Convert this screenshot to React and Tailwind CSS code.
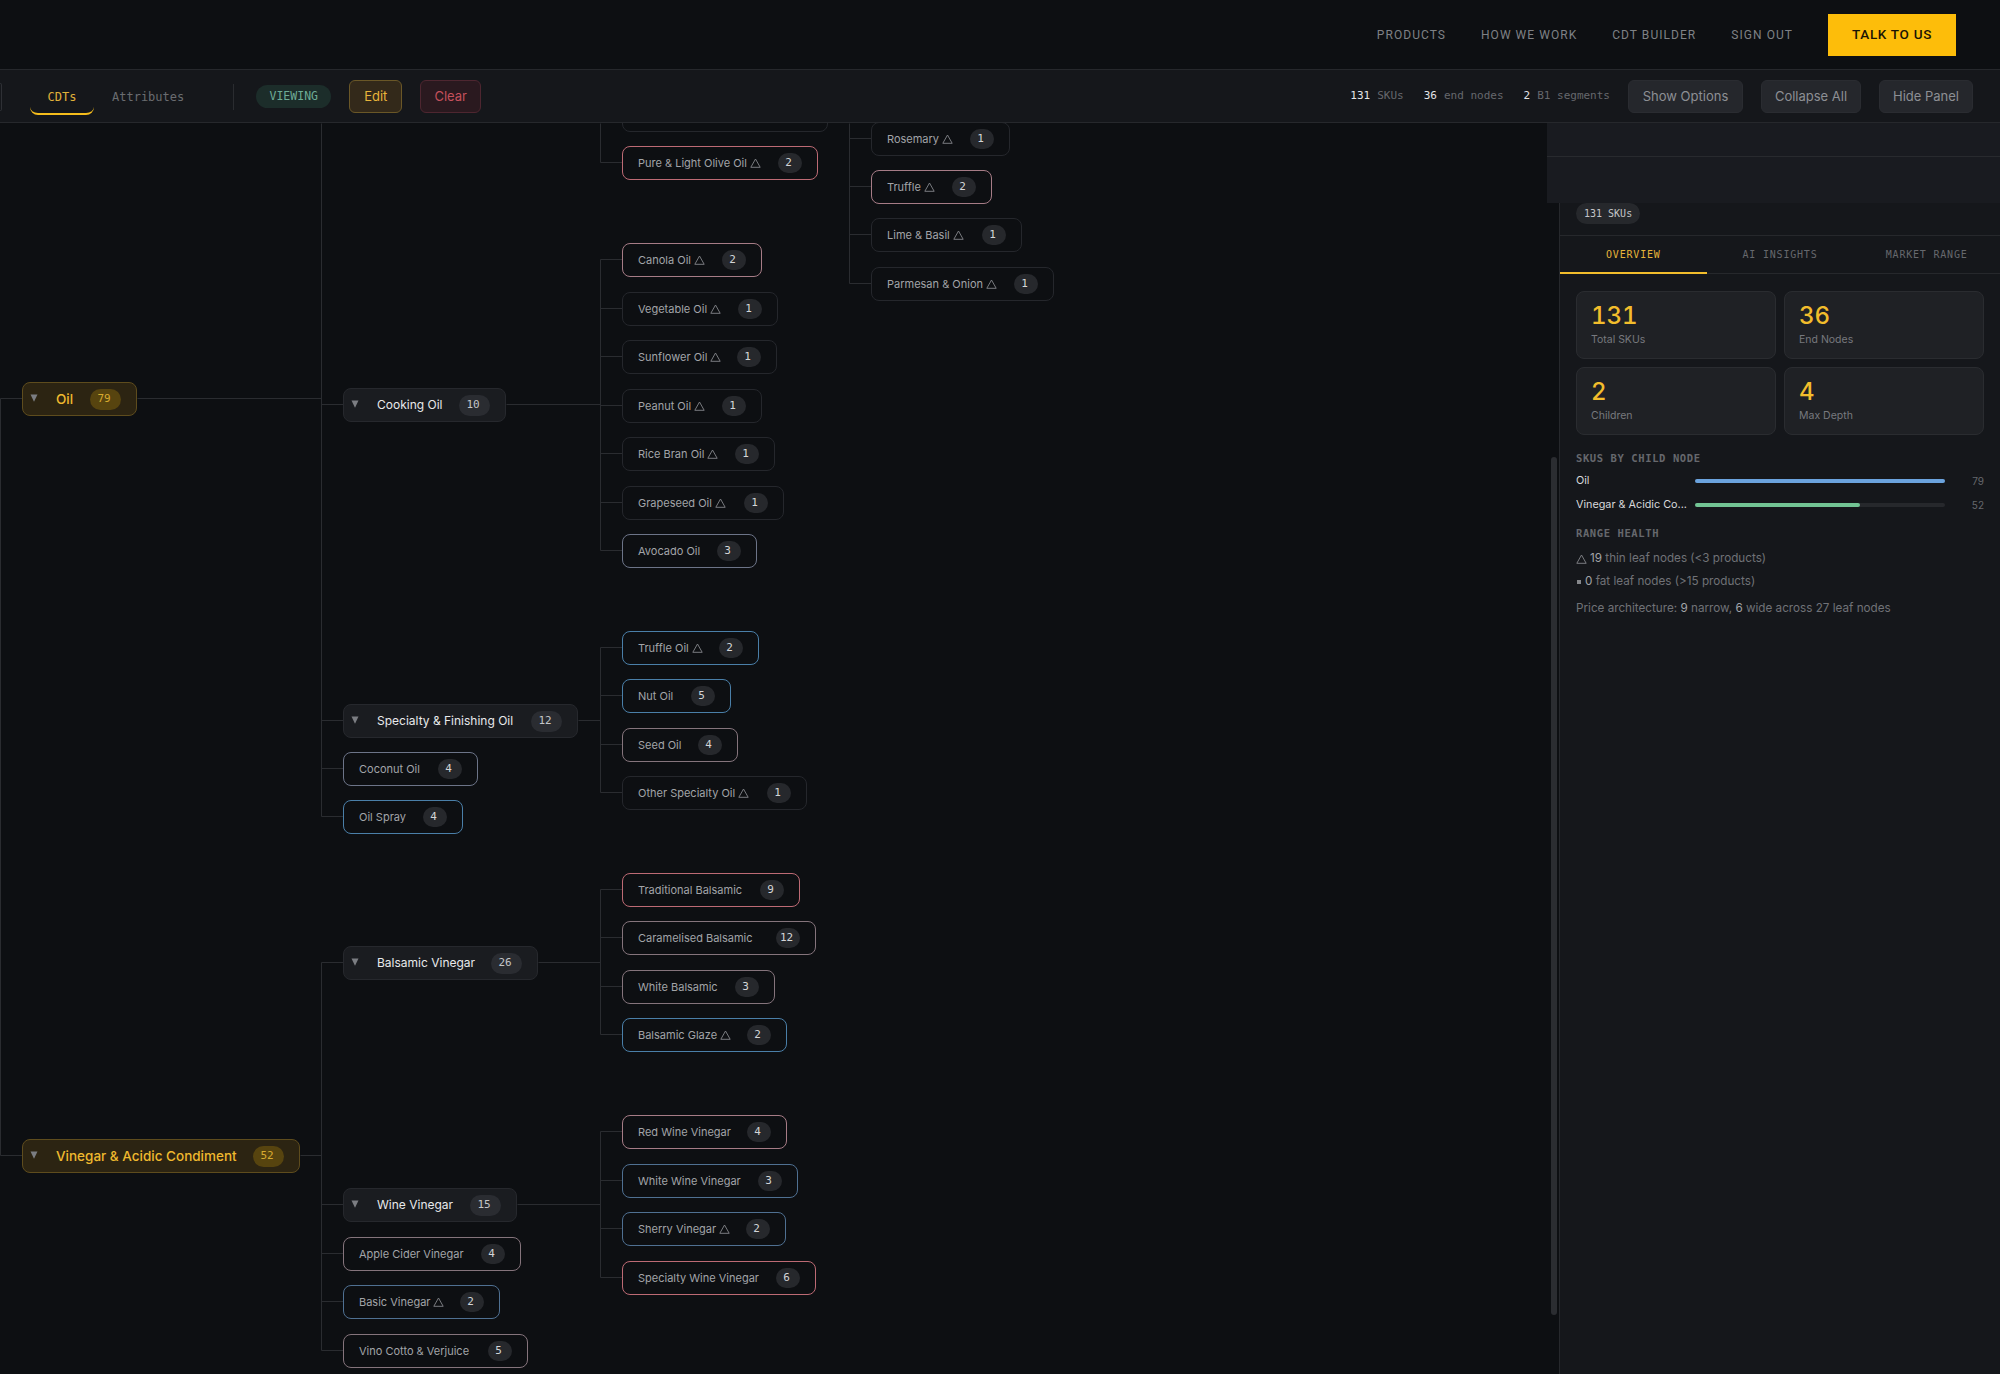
const RED = 'border-[#bd6a74]';
const PINK = 'border-[#a67c86]';
const MAUVE = 'border-[#85747c]';
const SLATE = 'border-[#6c7488]';
const BLUE = 'border-[#4a7fa8]';
const STEEL = 'border-[#4f7092]';
const PLAIN = 'border-[#25272c]';

const TOP_OFFSET = 123;
const MONO = "font-['DejaVu_Sans_Mono',monospace]";

const parents = [
  { label: 'Oil', count: 79, x: 22, x2: 137, y: 398, top: true },
  { label: 'Vinegar & Acidic Condiment', count: 52, x: 22, x2: 300, y: 1155, top: true },
  { label: 'Cooking Oil', count: 10, x: 343, x2: 506, y: 404 },
  { label: 'Specialty & Finishing Oil', count: 12, x: 343, x2: 578, y: 720 },
  { label: 'Balsamic Vinegar', count: 26, x: 343, x2: 538, y: 962 },
  { label: 'Wine Vinegar', count: 15, x: 343, x2: 517, y: 1204 },
];

const leaves = [
  { label: '', count: '', x: 622, x2: 828, y: 114, color: PLAIN },
  { label: 'Pure & Light Olive Oil', thin: true, count: 2, x: 622, x2: 818, y: 162, color: RED },
  { label: 'Canola Oil', thin: true, count: 2, x: 622, x2: 762, y: 259, color: PINK },
  { label: 'Vegetable Oil', thin: true, count: 1, x: 622, x2: 778, y: 308, color: PLAIN },
  { label: 'Sunflower Oil', thin: true, count: 1, x: 622, x2: 777, y: 356, color: PLAIN },
  { label: 'Peanut Oil', thin: true, count: 1, x: 622, x2: 762, y: 405, color: PLAIN },
  { label: 'Rice Bran Oil', thin: true, count: 1, x: 622, x2: 775, y: 453, color: PLAIN },
  { label: 'Grapeseed Oil', thin: true, count: 1, x: 622, x2: 784, y: 502, color: PLAIN },
  { label: 'Avocado Oil', count: 3, x: 622, x2: 757, y: 550, color: SLATE },
  { label: 'Truffle Oil', thin: true, count: 2, x: 622, x2: 759, y: 647, color: BLUE },
  { label: 'Nut Oil', count: 5, x: 622, x2: 731, y: 695, color: BLUE },
  { label: 'Seed Oil', count: 4, x: 622, x2: 738, y: 744, color: MAUVE },
  { label: 'Other Specialty Oil', thin: true, count: 1, x: 622, x2: 807, y: 792, color: PLAIN },
  { label: 'Traditional Balsamic', count: 9, x: 622, x2: 800, y: 889, color: RED },
  { label: 'Caramelised Balsamic', count: 12, x: 622, x2: 816, y: 937, color: MAUVE },
  { label: 'White Balsamic', count: 3, x: 622, x2: 775, y: 986, color: MAUVE },
  { label: 'Balsamic Glaze', thin: true, count: 2, x: 622, x2: 787, y: 1034, color: BLUE },
  { label: 'Red Wine Vinegar', count: 4, x: 622, x2: 787, y: 1131, color: PINK },
  { label: 'White Wine Vinegar', count: 3, x: 622, x2: 798, y: 1180, color: STEEL },
  { label: 'Sherry Vinegar', thin: true, count: 2, x: 622, x2: 786, y: 1228, color: STEEL },
  { label: 'Specialty Wine Vinegar', count: 6, x: 622, x2: 816, y: 1277, color: RED },
  { label: 'Coconut Oil', count: 4, x: 343, x2: 478, y: 768, color: SLATE },
  { label: 'Oil Spray', count: 4, x: 343, x2: 463, y: 816, color: BLUE },
  { label: 'Apple Cider Vinegar', count: 4, x: 343, x2: 521, y: 1253, color: MAUVE },
  { label: 'Basic Vinegar', thin: true, count: 2, x: 343, x2: 500, y: 1301, color: STEEL },
  { label: 'Vino Cotto & Verjuice', count: 5, x: 343, x2: 528, y: 1350, color: MAUVE },
  { label: 'Rosemary', thin: true, count: 1, x: 871, x2: 1010, y: 138, color: PLAIN },
  { label: 'Truffle', thin: true, count: 2, x: 871, x2: 992, y: 186, color: PINK },
  { label: 'Lime & Basil', thin: true, count: 1, x: 871, x2: 1022, y: 234, color: PLAIN },
  { label: 'Parmesan & Onion', thin: true, count: 1, x: 871, x2: 1054, y: 283, color: PLAIN },
];

// connector segments in page coordinates: [x1, y1, x2, y2]
const links = [
  [0, 398, 0, 1155], [0, 398, 22, 398], [0, 1155, 22, 1155],
  [137, 398, 321, 398], [300, 1155, 321, 1155],
  [321, 123, 321, 816], [321, 962, 321, 1350],
  [321, 404, 343, 404], [321, 720, 343, 720], [321, 768, 343, 768], [321, 816, 343, 816],
  [321, 962, 343, 962], [321, 1204, 343, 1204], [321, 1253, 343, 1253], [321, 1301, 343, 1301], [321, 1350, 343, 1350],
  [600, 123, 600, 162], [600, 162, 622, 162],
  [506, 404, 600, 404], [600, 259, 600, 550],
  [600, 259, 622, 259], [600, 308, 622, 308], [600, 356, 622, 356], [600, 405, 622, 405], [600, 453, 622, 453], [600, 502, 622, 502], [600, 550, 622, 550],
  [578, 720, 600, 720], [600, 647, 600, 792],
  [600, 647, 622, 647], [600, 695, 622, 695], [600, 744, 622, 744], [600, 792, 622, 792],
  [538, 962, 600, 962], [600, 889, 600, 1034],
  [600, 889, 622, 889], [600, 937, 622, 937], [600, 986, 622, 986], [600, 1034, 622, 1034],
  [517, 1204, 600, 1204], [600, 1131, 600, 1277],
  [600, 1131, 622, 1131], [600, 1180, 622, 1180], [600, 1228, 622, 1228], [600, 1277, 622, 1277],
  [849, 123, 849, 283], [849, 138, 871, 138], [849, 186, 871, 186], [849, 234, 871, 234], [849, 283, 871, 283],
];

const nodePos = (n) => ({ left: n.x, width: n.x2 - n.x, top: n.y - 16 - TOP_OFFSET });

const ThinMark = ({ className }) => (
  <svg width="11" height="10" viewBox="0 0 11 10" fill="none" className={className}>
    <path d="M5.5 1 L10.2 9.3 H0.8 Z" stroke="#85878b" strokeWidth="0.9" strokeLinejoin="round" />
  </svg>
);

const Caret = () => (
  <svg width="8" height="8" viewBox="0 0 8 8" className="shrink-0 mr-[18px] -mt-[2px]">
    <path d="M0.5 0.5 H7.5 L4 7.8 Z" fill="#7b7d82" />
  </svg>
);

const ParentNode = ({ node }) => (
  <div
    style={nodePos(node)}
    className={`absolute h-[34px] rounded-lg border flex items-center justify-between pl-[7px] pr-[15px] ${
      node.top ? 'bg-[#2c2412] border-[#5e4c1d]' : 'bg-[#1a1c20] border-[#26282d]'
    }`}
  >
    <div className="flex items-center min-w-0">
      <Caret />
      <span
        className={`whitespace-nowrap ${
          node.top ? 'text-[13.5px] font-medium text-[#efb92e]' : 'text-[12px] font-normal text-[#e8e9eb]'
        }`}
      >
        {node.label}
      </span>
    </div>
    <span
      className={`h-[21px] w-[31px] shrink-0 rounded-full flex items-center justify-center pr-[3px] text-[11px] ${MONO} ${
        node.top ? 'bg-[#57440f] text-[#d7ab2f]' : 'bg-[#2a2c31] text-[#c4c5c8]'
      }`}
    >
      {node.count}
    </span>
  </div>
);

const LeafNode = ({ node }) => (
  <div
    style={nodePos(node)}
    className={`absolute h-[34px] rounded-lg border bg-[#0d0f12] flex items-center justify-between pl-[15px] pr-[15px] ${node.color}`}
  >
    <span className="flex items-center gap-[3px] whitespace-nowrap text-[11px] text-[#a2a4a8]">
      {node.label}
      {node.thin && <ThinMark />}
    </span>
    {node.count !== '' && (
      <span className={`h-[20px] w-[24px] shrink-0 rounded-full bg-[#26282c] flex items-center justify-center pr-[3px] text-[11px] text-[#d4d5d7] ${MONO}`}>
        {node.count}
      </span>
    )}
  </div>
);

const TreeCanvas = () => (
  <div className="relative flex-1 overflow-hidden">
    <svg className="absolute inset-0 w-full h-full" fill="none">
      {links.map(([x1, y1, x2, y2]) => (
        <line
          key={`${x1}-${y1}-${x2}-${y2}`}
          x1={x1 + 0.5}
          y1={y1 - TOP_OFFSET + 0.5}
          x2={x2 + 0.5}
          y2={y2 - TOP_OFFSET + 0.5}
          stroke="#2a2c30"
        />
      ))}
    </svg>
    {parents.map((n) => <ParentNode key={n.label} node={n} />)}
    {leaves.map((n) => <LeafNode key={n.label || 'clipped'} node={n} />)}
  </div>
);

const Header = () => (
  <header className="h-[69px] flex items-center justify-end pr-[44px] bg-[#0d0f12]">
    <nav className="flex items-center gap-[35px] text-[12px] tracking-[1.05px] text-[#7f8185] font-['Roboto',sans-serif]">
      <span>PRODUCTS</span>
      <span>HOW WE WORK</span>
      <span>CDT BUILDER</span>
      <span>SIGN OUT</span>
    </nav>
    <button className="ml-[35px] w-[128px] h-[42px] bg-[#fdbd0a] text-[#1a1405] text-[13.5px] font-medium tracking-[0.7px] font-['Roboto',sans-serif]">
      TALK TO US
    </button>
  </header>
);

const Stat = ({ value, label }) => (
  <span className="whitespace-nowrap text-[#66686d]">
    <span className="text-[#e3e4e6] mr-[7px]">{value}</span>
    {label}
  </span>
);

const ToolButton = ({ children, className }) => (
  <button className={`h-[33px] rounded-md border flex items-center justify-center text-[13px] ${className}`}>
    {children}
  </button>
);

const Toolbar = () => (
  <div className="h-[54px] pt-px flex items-center bg-[#15171b] border-y border-[#26282c]">
    <div className="h-[28px] w-[2px] rounded-r border-r border-y border-[#2e3035]" />
    <div className={`ml-[28px] w-[64px] h-[32px] relative flex items-center justify-center ${MONO} text-[12px] text-[#e0b13a]`}>
      CDTs
      <span className="absolute left-0 right-0 bottom-[-2px] h-[8px] rounded-b-lg border-b-2 border-[#f5bd1c]" />
    </div>
    <span className={`ml-[18px] ${MONO} text-[12px] text-[#6a6c70]`}>Attributes</span>
    <div className="ml-[49px] h-[26px] w-px bg-[#2a2c30]" />
    <span className={`ml-[22px] h-[23px] w-[75px] rounded-full bg-[#1c2d2a] flex items-center justify-center ${MONO} text-[11.5px] text-[#6eab95]`}>
      VIEWING
    </span>
    <ToolButton className="ml-[18px] w-[53px] bg-[#33291a] border-[#6a5727] text-[#e8b53a] text-[13.5px]">Edit</ToolButton>
    <ToolButton className="ml-[18px] w-[61px] bg-[#2a191f] border-[#4e2630] text-[#c5505c] text-[13.5px]">Clear</ToolButton>
    <div className={`ml-auto flex items-center gap-[20px] ${MONO} text-[11px] mr-[18px]`}>
      <Stat value="131" label="SKUs" />
      <Stat value="36" label="end nodes" />
      <Stat value="2" label="B1 segments" />
    </div>
    <div className="flex items-center gap-[18px] mr-[27px]">
      <ToolButton className="w-[115px] bg-[#25272c] border-[#2a2c31] text-[#8d8f94]">Show Options</ToolButton>
      <ToolButton className="w-[100px] bg-[#25272c] border-[#2a2c31] text-[#8d8f94]">Collapse All</ToolButton>
      <ToolButton className="w-[94px] bg-[#25272c] border-[#2a2c31] text-[#8d8f94]">Hide Panel</ToolButton>
    </div>
  </div>
);

const Card = ({ value, label }) => (
  <div className="h-[68px] rounded-lg border border-[#2a2c30] bg-[#1f2125] pl-[14px] pt-[10px]">
    <div className="text-[24px] leading-[28px] font-medium tabular-nums text-[#f2bd2c]">{value}</div>
    <div className="text-[10.5px] leading-[17px] text-[#77797e] mt-[1px]">{label}</div>
  </div>
);

const Bar = ({ label, value, pct, color }) => (
  <div className="h-[24px] flex items-center">
    <span className="w-[119px] shrink-0 truncate text-[10.8px] text-[#d8d9db]">{label}</span>
    <div className="w-[250px] h-[4px] rounded-full bg-[#26282c]">
      <div className={`h-full rounded-full ${color}`} style={{ width: `${pct}%` }} />
    </div>
    <span className="ml-auto text-[10px] text-[#66686d]">{value}</span>
  </div>
);

const SectionTitle = ({ children }) => (
  <div className={`${MONO} font-bold text-[10.5px] tracking-[0.6px] leading-[14px] text-[#66686d]`}>
    {children}
  </div>
);

const SidePanel = () => (
  <aside className="w-[453px] shrink-0 flex flex-col">
    <div className="h-[80px] bg-[#191b20] pt-[33px]">
      <div className="h-px bg-[#282a2e]" />
    </div>
    <div className="flex-1 flex min-h-0">
      <div className="w-[12px] shrink-0 pl-[4px] pt-[254px] pb-[59px] flex">
        <div className="w-[6px] rounded-full bg-[#2b2d31]" />
      </div>
      <div className="flex-1 bg-[#15171b] border-l border-[#26282c]">
        <div className="h-[32px] pl-[16px] flex items-start">
          <span className={`flex items-center h-[21px] px-[8px] rounded-full bg-[#26282c] ${MONO} text-[10px] text-[#c4c5c8]`}>
            131 SKUs
          </span>
        </div>
        <div className={`h-[39px] grid grid-cols-3 border-y border-[#26282c] ${MONO} text-[10px] tracking-[0.8px]`}>
          <div className="-mb-px border-b-2 border-[#f2bd2c] flex items-center justify-center text-[#e6b43a]">OVERVIEW</div>
          <div className="flex items-center justify-center text-[#66686d]">AI INSIGHTS</div>
          <div className="flex items-center justify-center text-[#66686d]">MARKET RANGE</div>
        </div>
        <div className="px-[16px] pt-[17px]">
          <div className="grid grid-cols-2 gap-x-[8px] gap-y-[8px]">
            <Card value="131" label="Total SKUs" />
            <Card value="36" label="End Nodes" />
            <Card value="2" label="Children" />
            <Card value="4" label="Max Depth" />
          </div>
          <div className="mt-[16px]">
            <SectionTitle>SKUS BY CHILD NODE</SectionTitle>
          </div>
          <div className="mt-[4px]">
            <Bar label="Oil" value="79" pct={100} color="bg-[#6ba3de]" />
            <Bar label="Vinegar & Acidic Co..." value="52" pct={66} color="bg-[#72c494]" />
          </div>
          <div className="mt-[9px]">
            <SectionTitle>RANGE HEALTH</SectionTitle>
          </div>
          <div className="mt-[7px] text-[11.7px] leading-[23px] text-[#707277]">
            <div className="flex items-center gap-[3px]">
              <ThinMark />
              <span><span className="text-[#a2a4a8]">19</span> thin leaf nodes (&lt;3 products)</span>
            </div>
            <div className="flex items-center gap-[4px]">
              <span className="w-[4px] h-[4px] ml-px bg-[#85878b]" />
              <span><span className="text-[#a2a4a8]">0</span> fat leaf nodes (&gt;15 products)</span>
            </div>
            <div className="mt-[4px]">
              Price architecture: <span className="text-[#a2a4a8]">9</span> narrow, <span className="text-[#a2a4a8]">6</span> wide across 27 leaf nodes
            </div>
          </div>
        </div>
      </div>
    </div>
  </aside>
);

export default function App() {
  return (
    <div className="h-[1374px] w-[2000px] overflow-hidden bg-[#0d0f12] font-['Inter',sans-serif] flex flex-col">
      <Header />
      <Toolbar />
      <main className="flex-1 flex min-h-0">
        <TreeCanvas />
        <SidePanel />
      </main>
    </div>
  );
}
